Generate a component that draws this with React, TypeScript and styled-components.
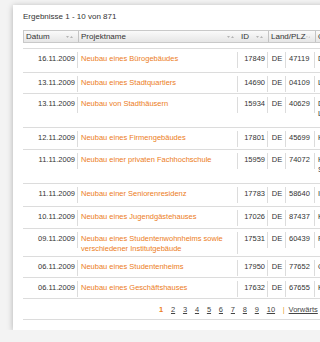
import React from "react";
import styled, { createGlobalStyle } from "styled-components";

type Row = {
  date: string;
  name: React.ReactNode;
  id: string;
  plz: string;
  city: React.ReactNode;
  h: number;
};

const rows: Row[] = [
  { date: "16.11.2009", name: "Neubau eines Bürogebäudes", id: "17849", plz: "47119", city: "Duisburg", h: 24 },
  { date: "13.11.2009", name: "Neubau eines Stadtquartiers", id: "14690", plz: "04109", city: "Leipzig", h: 21 },
  { date: "13.11.2009", name: "Neubau von Stadthäusern", id: "15934", plz: "40629", city: <>Düsseldorf-<br />Ludenberg</>, h: 34 },
  { date: "12.11.2009", name: "Neubau eines Firmengebäudes", id: "17801", plz: "45699", city: "Herten", h: 22 },
  { date: "11.11.2009", name: "Neubau einer privaten Fachhochschule", id: "15959", plz: "74072", city: <>Heilbronn<br />Sontheim</>, h: 34 },
  { date: "11.11.2009", name: "Neubau einer Seniorenresidenz", id: "17783", plz: "58640", city: "Iserlohn", h: 23 },
  { date: "10.11.2009", name: "Neubau eines Jugendgästehauses", id: "17026", plz: "87437", city: "Kempten", h: 22 },
  { date: "09.11.2009", name: <>Neubau eines Studentenwohnheims sowie<br />verschiedener Institutgebäude</>, id: "17531", plz: "60439", city: "Frankfurt", h: 28 },
  { date: "06.11.2009", name: "Neubau eines Studentenheims", id: "17950", plz: "77652", city: "Offenburg", h: 21 },
  { date: "06.11.2009", name: "Neubau eines Geschäftshauses", id: "17632", plz: "67655", city: "Kaiserslautern", h: 21 },
];

const pages = ["2", "3", "4", "5", "6", "7", "8", "9", "10"];

const SortIcon = () => (
  <svg width="7" height="4" viewBox="0 0 7 4">
    <path d="M0 1 L3 1 L1.5 3 Z" fill="#b4b4b4" />
    <path d="M4 3 L7 3 L5.5 1 Z" fill="#b4b4b4" />
  </svg>
);

export default function App() {
  return (
    <>
      <GlobalStyle />
      <Panel>
        <Title>Ergebnisse 1 - 10 von 871</Title>
        <Grid>
          <Header>
            <HeadCell $sep>
              Datum <SortIcon />
            </HeadCell>
            <HeadCell>
              Projektname <SortIcon />
            </HeadCell>
            <HeadCell $sep>
              ID <SortIcon />
            </HeadCell>
            <HeadCell $sep $span={2}>
              Land/PLZ <SortIcon />
            </HeadCell>
            <HeadCell>Ort</HeadCell>
          </Header>
          {rows.map((r, i) => (
            <BodyRow key={i} $h={r.h}>
              <Cell $align="right">{r.date}</Cell>
              <Cell>
                <Link>{r.name}</Link>
              </Cell>
              <Cell $align="right">{r.id}</Cell>
              <Cell $align="center">DE</Cell>
              <Cell>{r.plz}</Cell>
              <Cell $last>{r.city}</Cell>
            </BodyRow>
          ))}
          <Pager>
            <Current>1</Current>
            {pages.map((p) => (
              <PageLink key={p}>{p}</PageLink>
            ))}
            <Bar>|</Bar>
            <PageLink>Vorwärts</PageLink>
          </Pager>
        </Grid>
      </Panel>
    </>
  );
}

const GlobalStyle = createGlobalStyle`
  html, body {
    margin: 0;
    padding: 0;
    overflow: hidden;
    background: #f3f3f3;
  }
  body {
    font-family: "Liberation Sans", Arial, sans-serif;
    font-size: 7.5px;
    color: #333;
  }
`;

const Panel = styled.div`
  margin: 5px 0 0 13px;
  width: 345px;
  height: 325px;
  box-sizing: border-box;
  padding: 7px 0 0 10px;
  background: #fff;
  box-shadow: 0 1px 6px rgba(0, 0, 0, 0.28);
`;

const Title = styled.div`
  font-size: 8px;
  line-height: 10px;
  margin-bottom: 8px;
`;

const Grid = styled.div`
  width: 330px;
`;

const cols = "55px 160px 30px 18px 29px 1fr";

const Header = styled.div`
  display: grid;
  grid-template-columns: ${cols};
  height: 13px;
  box-sizing: border-box;
  border: 1px solid #c9c9c9;
  background: linear-gradient(#fafafa, #e6e6e6);
  margin-bottom: 5px;
`;

const HeadCell = styled.div<{ $sep?: boolean; $span?: number }>`
  grid-column: span ${(p) => p.$span ?? 1};
  display: flex;
  align-items: center;
  justify-content: space-between;
  padding: 0 5px 0 2px;
  font-size: 8px;
  line-height: 11px;
  border-right: ${(p) => (p.$sep ? "1px solid #c4c4c4" : "none")};
  white-space: nowrap;
  overflow: hidden;
`;

const BodyRow = styled.div<{ $h: number }>`
  display: grid;
  grid-template-columns: ${cols};
  align-items: start;
  height: ${(p) => p.$h}px;
  box-sizing: border-box;
  border-top: 1px solid #dcdcdc;
`;

const Cell = styled.div<{ $align?: "left" | "right" | "center"; $last?: boolean }>`
  margin-top: 3px;
  min-height: 16px;
  box-sizing: border-box;
  padding: 2px 2px 0 3px;
  line-height: 10px;
  text-align: ${(p) => p.$align ?? "left"};
  border-right: ${(p) => (p.$last ? "none" : "1px solid #dcdcdc")};
  white-space: nowrap;
  overflow: hidden;
`;

const Link = styled.span`
  color: #ec7d1c;
`;

const Pager = styled.div`
  display: flex;
  align-items: center;
  gap: 7.8px;
  height: 22px;
  box-sizing: border-box;
  padding-left: 136px;
  border-top: 1px solid #dcdcdc;
  border-bottom: 1px solid #dcdcdc;
`;

const PageLink = styled.span`
  color: #444;
  text-decoration: underline;
`;

const Current = styled.span`
  color: #ec7d1c;
  font-weight: bold;
`;

const Bar = styled.span`
  color: #e8a030;
  margin-right: -4px;
`;
